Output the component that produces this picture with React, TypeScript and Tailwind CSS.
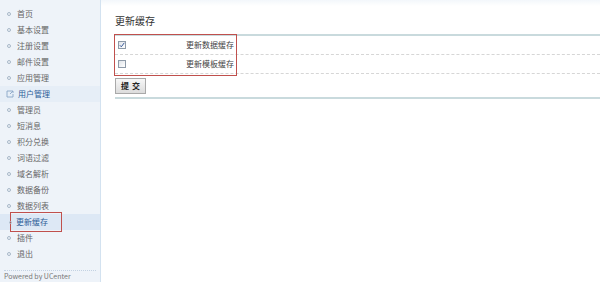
import React from "react";

const menu = [
  "首页",
  "基本设置",
  "注册设置",
  "邮件设置",
  "应用管理",
  "用户管理",
  "管理员",
  "短消息",
  "积分兑换",
  "词语过滤",
  "域名解析",
  "数据备份",
  "数据列表",
  "更新缓存",
  "插件",
  "退出",
];

const font = { fontFamily: '"Noto Sans CJK SC", "Liberation Sans", sans-serif' };

const Sidebar = () => {
  return (
    <div className="w-[101px] h-[282px] shrink-0 bg-[#eef3f9] border-r border-[#d3e2f0] pt-[6px] overflow-hidden">
      {menu.map((item) => {
        if (item === "用户管理") {
          return (
            <div key={item} className="h-[16px] flex items-center pl-[6px] bg-[#e6eef7]">
              <svg width="8" height="8" viewBox="0 0 8 8" className="mr-[4px]">
                <path d="M5 1H1v6h6V4" fill="none" stroke="#8aa6c6" strokeWidth="0.9" />
                <path d="M4 4l3-3M5 1h2v2" fill="none" stroke="#8aa6c6" strokeWidth="0.9" />
              </svg>
              <span className="text-[8px] text-[#2c5d97] leading-none">{item}</span>
            </div>
          );
        }
        if (item === "更新缓存") {
          return (
            <div key={item} className="h-[16px] flex items-center bg-[#dde8f5]">
              <div className="ml-[10px] w-[52px] h-[20px] border border-[#c0504d] flex items-center">
                <span className="ml-[-2px] mr-[4px] w-[3px] h-[3px] rounded-full border border-[#a8b8c8]"></span>
                <span className="text-[8px] text-[#2c5d97] leading-none">{item}</span>
              </div>
            </div>
          );
        }
        return (
          <div key={item} className="h-[16px] flex items-center pl-[7px]">
            <span className="w-[4px] h-[4px] rounded-full border border-[#a8b8c8] mr-[6px]"></span>
            <span className="text-[8px] text-[#666] leading-none">{item}</span>
          </div>
        );
      })}
      <div className="mt-[8px] mx-[4px] border-t border-dotted border-[#c3d2e2]"></div>
      <div className="pl-[4px] pt-[2px] text-[7px] text-[#777] leading-none">Powered by UCenter</div>
    </div>
  );
};

const Check = ({ checked }: { checked: boolean }) => {
  return (
    <span className="w-[8px] h-[8px] border border-[#8e9aa8] bg-gradient-to-br from-[#dfe3e8] to-white flex items-center justify-center">
      {checked && (
        <svg width="6" height="6" viewBox="0 0 6 6">
          <path d="M0.8 3.2l1.5 1.6L5.3 0.8" fill="none" stroke="#3a5a9a" strokeWidth="1" />
        </svg>
      )}
    </span>
  );
};

const Row = ({ label, checked }: { label: string; checked: boolean }) => {
  return (
    <div className="h-[19px] flex items-center border-b border-dashed border-[#d6d6d6]">
      <div className="w-[122px] flex items-center justify-between pl-[3px] pr-[3px]">
        <Check checked={checked} />
        <span className="text-[8px] text-[#444] leading-none">{label}</span>
      </div>
    </div>
  );
};

export default function App() {
  return (
    <div className="w-[600px] h-[282px] flex bg-white overflow-hidden" style={font}>
      <Sidebar />
      <div className="flex-1 bg-gradient-to-b from-[#f3f7fb] to-white to-[6px] pl-[14px]">
        <div className="pt-[16px] h-[34px] text-[10px] text-[#333] leading-none">更新缓存</div>
        <div className="relative border-t-2 border-[#c9dadd]">
          <Row label="更新数据缓存" checked={true} />
          <Row label="更新模板缓存" checked={false} />
          <div className="absolute left-[-1px] top-[-2px] w-[123px] h-[42px] border border-[#c0504d] pointer-events-none"></div>
        </div>
        <div className="pt-[4px] pb-[3px] flex">
          <button className="h-[16px] w-[31px] border border-[#a9a9a9] bg-gradient-to-b from-[#f7f7f7] to-[#dcdcdc] text-[8px] font-bold text-[#222] leading-none flex items-center justify-center gap-[3px]">
            <span>提</span>
            <span>交</span>
          </button>
        </div>
        <div className="border-t-2 border-[#c9dadd]"></div>
      </div>
    </div>
  );
}
